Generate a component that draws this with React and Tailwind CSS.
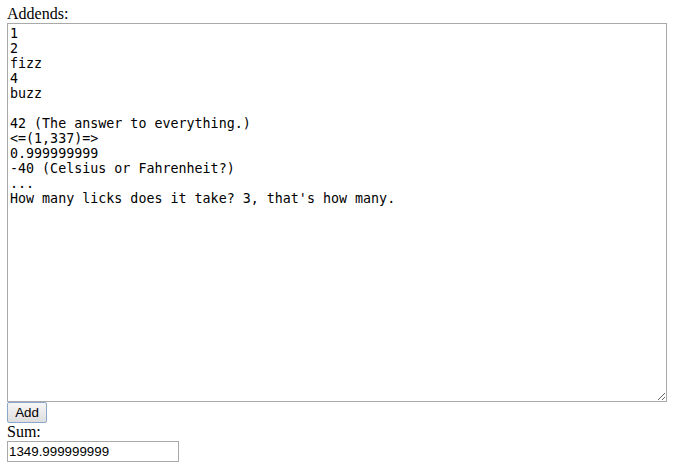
import React, { useState } from "react";

const initialAddends = `1
2
fizz
4
buzz

42 (The answer to everything.)
<=(1,337)=>
0.999999999
-40 (Celsius or Fahrenheit?)
...
How many licks does it take? 3, that's how many.`;

const App = () => {
  const [addends, setAddends] = useState(initialAddends);
  const [sum, setSum] = useState("1349.999999999");

  const handleAdd = () => {
    // sum every number found in the lines
    const total = addends
      .split("\n")
      .flatMap((line) => line.match(/-?\d+(\.\d+)?/g) || [])
      .reduce((acc, n) => acc + parseFloat(n), 0);
    setSum(String(total));
  };

  return (
    <div className="pl-[7px] pt-[5px] bg-white min-h-screen text-black">
      <label
        htmlFor="addends"
        className="block text-[16px] leading-[18px] font-['Liberation_Serif',serif]"
      >
        Addends:
      </label>
      <textarea
        id="addends"
        value={addends}
        onChange={(e) => setAddends(e.target.value)}
        className="block w-[660px] h-[379px] border border-[#a9a9a9] p-[2px] text-[13.33px] leading-[15px] font-['DejaVu_Sans_Mono',monospace] resize outline-none"
      />
      <button
        onClick={handleAdd}
        className="block w-[40px] h-[21px] border border-[#8aa8cc] rounded-[2px] bg-gradient-to-b from-[#f6f6f6] to-[#dedede] text-[13.33px] leading-[15px] font-['Liberation_Sans',sans-serif]"
      >
        Add
      </button>
      <label
        htmlFor="sum"
        className="block text-[16px] leading-[18px] font-['Liberation_Serif',serif]"
      >
        Sum:
      </label>
      <input
        id="sum"
        type="text"
        value={sum}
        readOnly
        className="block w-[172px] h-[21px] border border-[#a9a9a9] px-[1px] text-[13.33px] font-['Liberation_Sans',sans-serif] outline-none"
      />
    </div>
  );
};

export default App;
